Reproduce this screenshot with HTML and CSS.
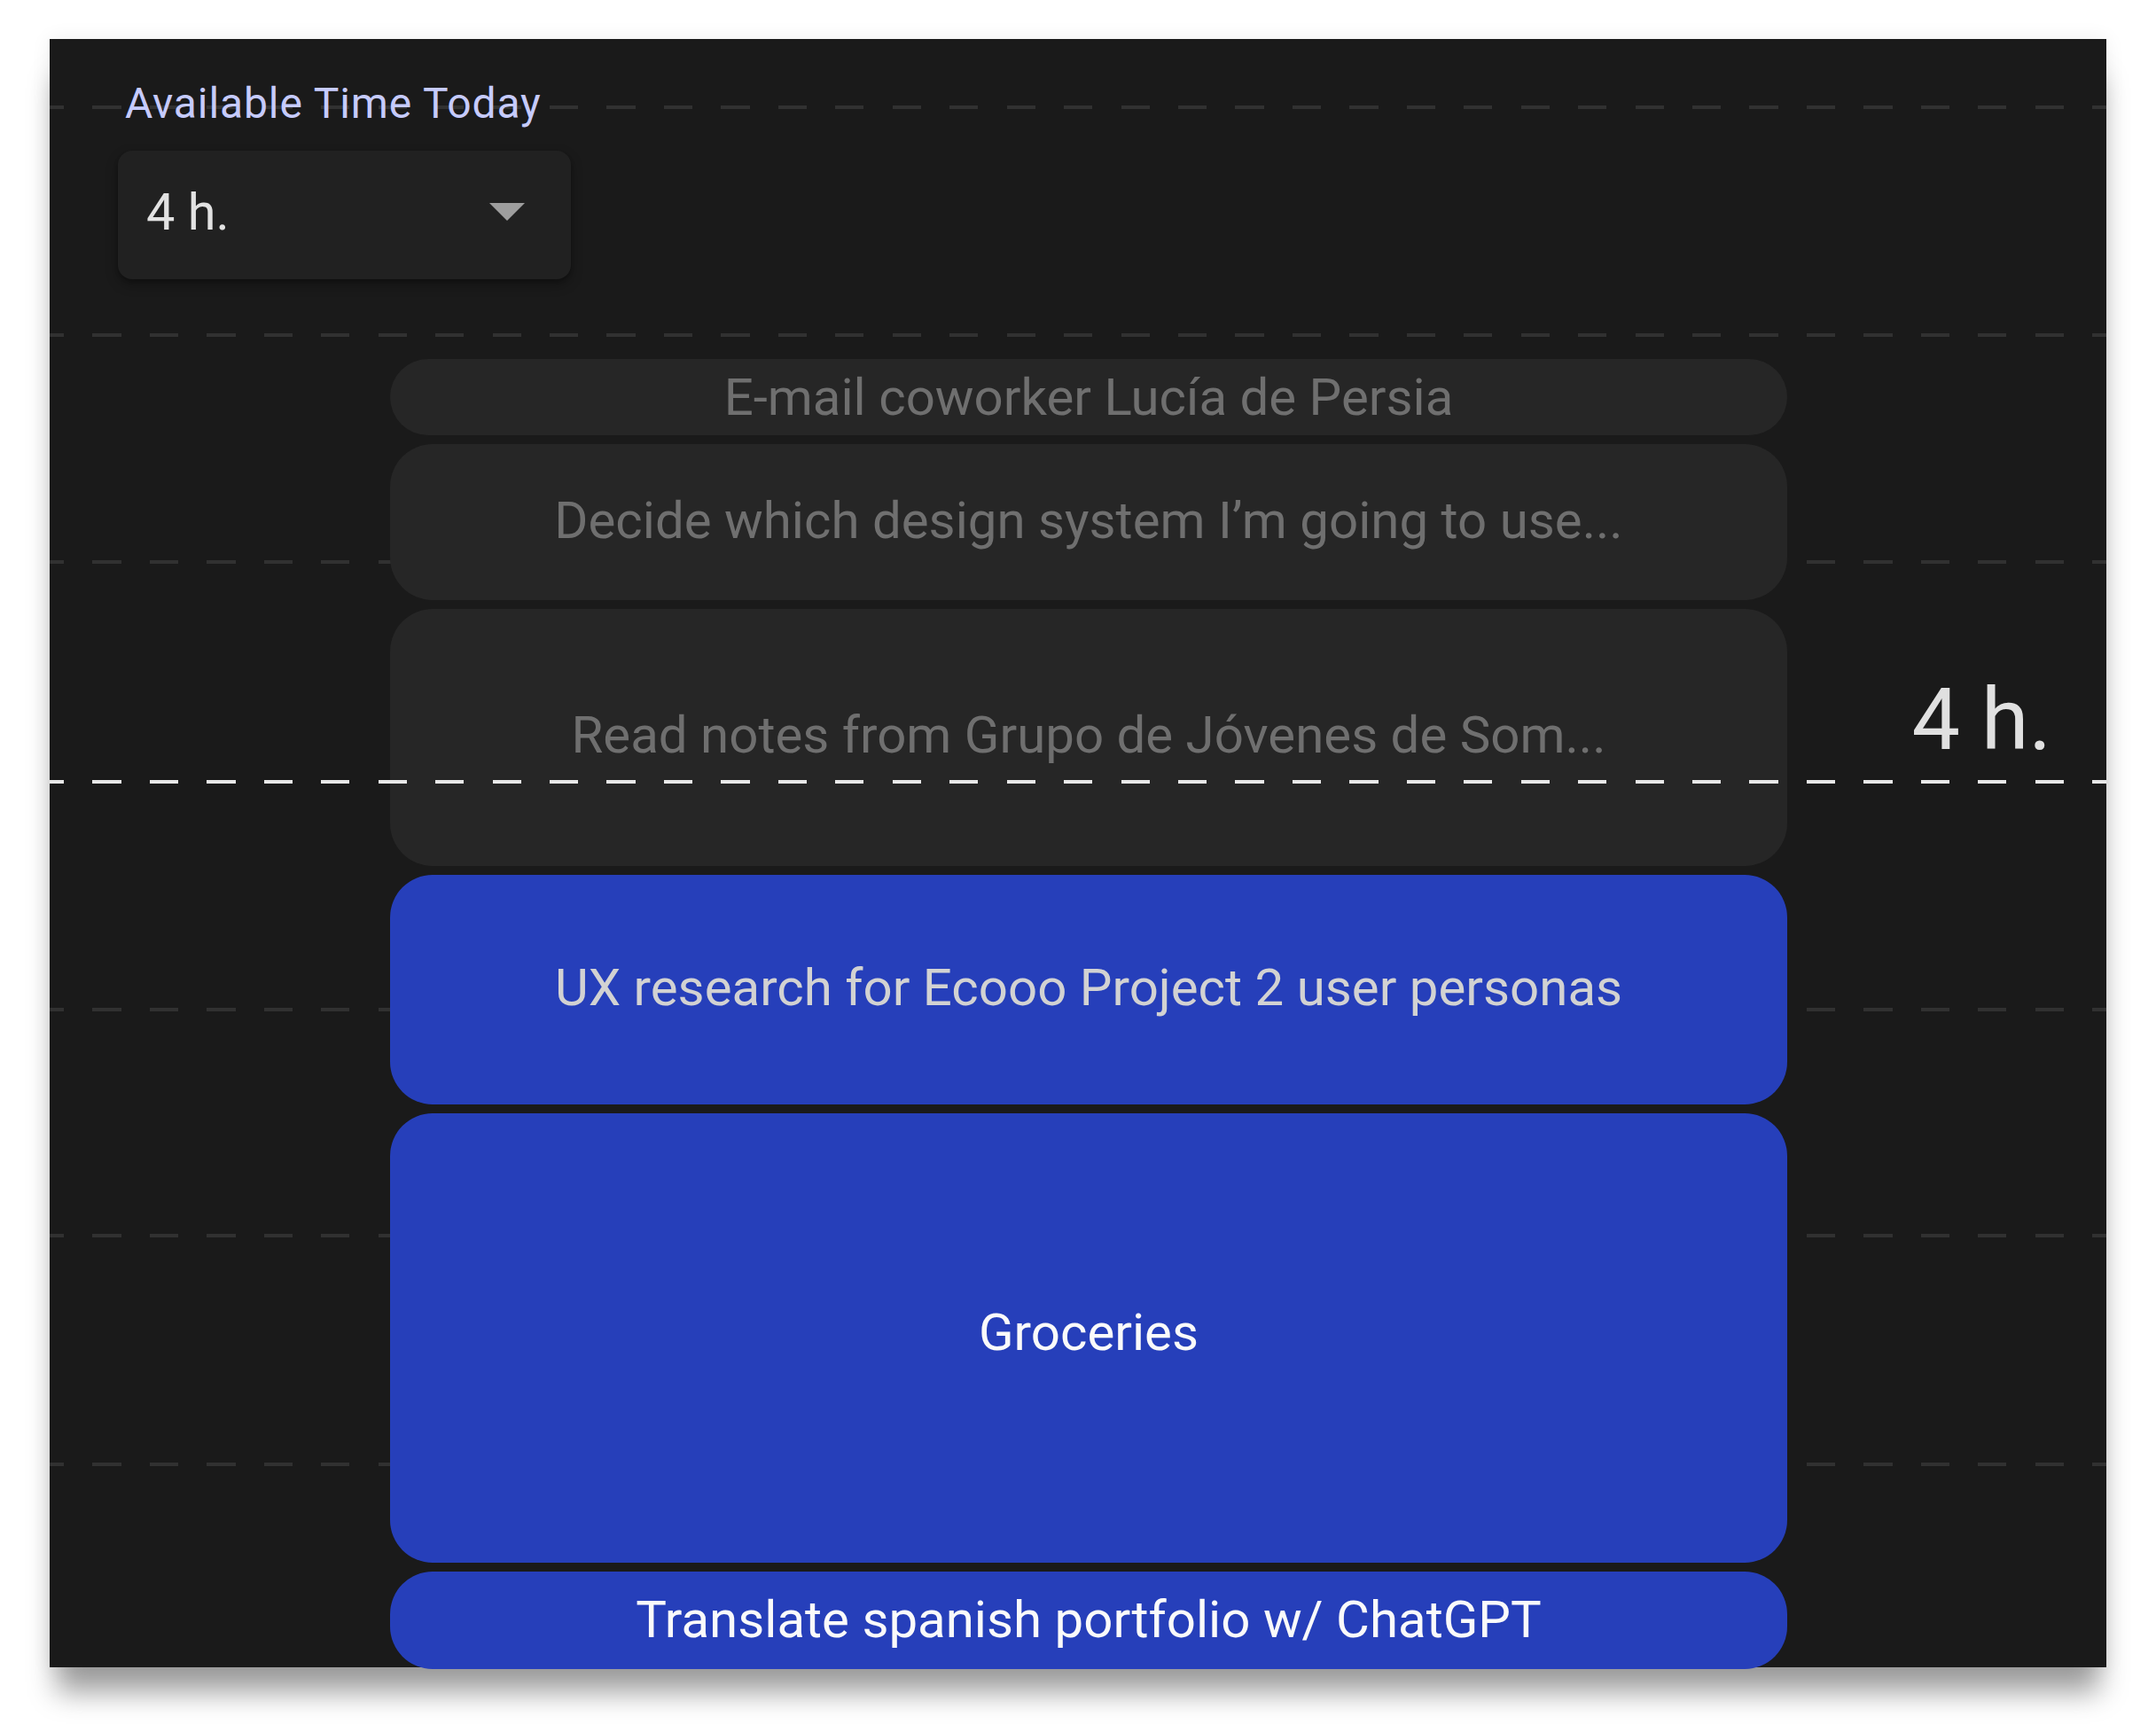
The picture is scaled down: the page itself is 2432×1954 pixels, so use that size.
FILE: index.html
```html
<!DOCTYPE html>
<html lang="en">
<head>
<meta charset="utf-8">
<title>Available Time Today</title>
<link rel="stylesheet" href="styles.css">
</head>
<body>
<div class="stage">
  <section class="panel">
    <header class="avail">
      <div class="avail-label">Available Time Today</div>
      <div class="select">
        <span class="select-value">4 h.</span>
        <svg class="select-arrow" viewBox="0 0 40 20" aria-hidden="true"><polygon points="0,0 40,0 20,20"/></svg>
      </div>
    </header>

    <div class="tasks">
      <div class="task task--muted" style="height:86px"><span class="task-title">E-mail coworker Lucía de Persia</span></div>
      <div class="task task--muted" style="height:176px"><span class="task-title">Decide which design system I’m going to use...</span></div>
      <div class="task task--muted" style="height:290px"><span class="task-title">Read notes from Grupo de Jóvenes de Som...</span></div>
      <div class="task task--active task--soft" style="height:259px"><span class="task-title">UX research for Ecooo Project 2 user personas</span></div>
      <div class="task task--active" style="height:507px"><span class="task-title">Groceries</span></div>
      <div class="task task--active" style="height:110px"><span class="task-title">Translate spanish portfolio w/ ChatGPT</span></div>
    </div>

    <div class="limit">
      <div class="limit-label">4 h.</div>
      <div class="limit-line"></div>
    </div>
  </section>
</div>
</body>
</html>
```

FILE: styles.css
```css
* { box-sizing: border-box; }

html, body {
  margin: 0;
  padding: 0;
  background: #ffffff;
}

body {
  font-family: Roboto, "Noto Sans", "Liberation Sans", sans-serif;
}

.stage {
  padding: 44px 0 0 56px;
  height: 1954px;
}

.panel {
  position: relative;
  width: 2320px;
  height: 1837px;
  padding-top: 45px;
  background-color: #1a1a1a;
  background-image:
    repeating-linear-gradient(90deg, #313131 0 16.2px, transparent 16.2px 48.45px, #313131 48.45px 64.45px),
    repeating-linear-gradient(90deg, #313131 0 16.2px, transparent 16.2px 48.45px, #313131 48.45px 64.45px),
    repeating-linear-gradient(90deg, #313131 0 16.2px, transparent 16.2px 48.45px, #313131 48.45px 64.45px),
    repeating-linear-gradient(90deg, #313131 0 16.2px, transparent 16.2px 48.45px, #313131 48.45px 64.45px),
    repeating-linear-gradient(90deg, #313131 0 16.2px, transparent 16.2px 48.45px, #313131 48.45px 64.45px),
    repeating-linear-gradient(90deg, #313131 0 16.2px, transparent 16.2px 48.45px, #313131 48.45px 64.45px);
  background-size: 100% 4px;
  background-repeat: no-repeat;
  background-position: 0 75px, 0 332px, 0 588px, 0 1093px, 0 1348px, 0 1606px;
  box-shadow: 0 36px 30px -8px rgba(0, 0, 0, 0.38), 0 0 22px rgba(0, 0, 0, 0.07);
}

/* header: label + select */
.avail {
  padding-left: 77px;
}

.avail-label {
  margin-left: 8px;
  font-size: 48px;
  line-height: 56px;
  color: #c6cbfd;
  letter-spacing: 0.9px;
}

.select {
  margin-top: 25px;
  width: 511px;
  height: 145px;
  display: flex;
  align-items: center;
  padding: 0 52px 7px 32px;
  border-radius: 16px;
  background: #212121;
  box-shadow: 0 6px 14px rgba(0, 0, 0, 0.3), 0 2px 4px rgba(0, 0, 0, 0.2);
}

.select-value {
  font-size: 57.6px;
  color: #e2e2e2;
}

.select-arrow {
  margin-left: auto;
  width: 40px;
  height: 20px;
  fill: #9e9e9e;
}

/* task stack */
.tasks {
  margin-top: 90px;
  margin-left: 384px;
  width: 1576px;
  display: flex;
  flex-direction: column;
  gap: 10px;
}

.task {
  display: flex;
  flex-direction: column;
  align-items: center;
  border-radius: 48px;
  font-size: 58.2px;
  white-space: nowrap;
  overflow: hidden;
  flex: none;
}

/* title sits slightly above the vertical middle */
.task::before {
  content: "";
  flex: 485 1 0;
}

.task::after {
  content: "";
  flex: 515 1 0;
}

.task-title {
  flex: none;
}

.task--muted {
  background: #262626;
  color: #6f6f6f;
}

.task--active {
  background: #263fba;
  color: #fafafa;
}

.task--soft {
  color: #d2d2d2;
}

/* available-time marker drawn over the stack */
.limit {
  position: absolute;
  left: 0;
  right: 0;
  top: 712px;
}

.limit-label {
  text-align: right;
  padding-right: 62px;
  font-size: 97px;
  line-height: 112px;
  color: #e0e0e0;
}

.limit-line {
  margin-top: 12px;
  height: 4px;
  background: repeating-linear-gradient(90deg, #e8e8e8 0 16.2px, transparent 16.2px 48.45px, #e8e8e8 48.45px 64.45px);
}
```
